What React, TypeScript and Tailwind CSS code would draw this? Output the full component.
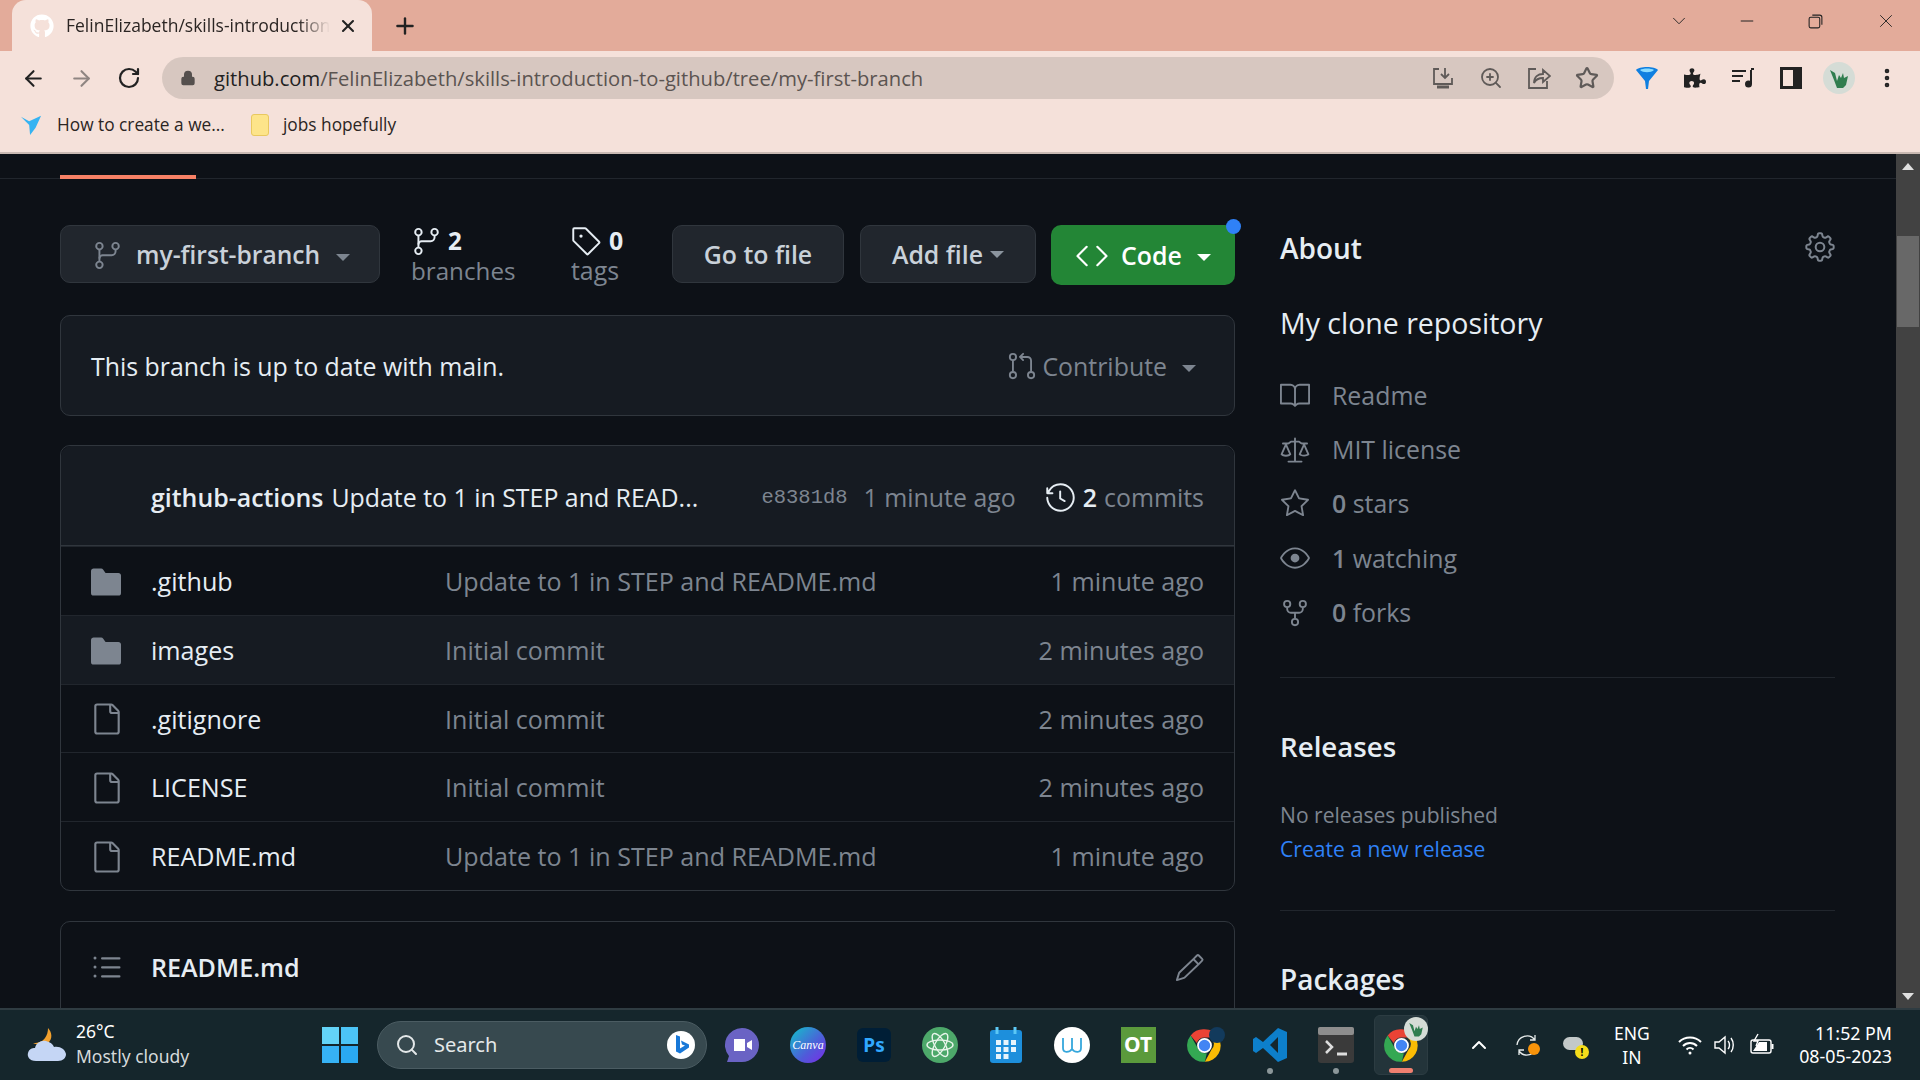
import type { ReactNode } from "react";
import { ArrowLeft, ArrowRight, ChevronDown, ChevronUp, Minus, MoreVertical, Plus, RotateCw, Search, Star, X, ZoomIn, Lock } from "lucide-react";
import { FaGithub, FaPuzzlePiece } from "react-icons/fa";
import {
  GoBook,
  GoCode,
  GoEye,
  GoFile,
  GoFileDirectoryFill,
  GoGear,
  GoGitBranch,
  GoGitPullRequest,
  GoHistory,
  GoLaw,
  GoListUnordered,
  GoPencil,
  GoRepoForked,
  GoStar,
  GoTag,
} from "react-icons/go";

const files = [
  { name: ".github", dir: true, message: "Update to 1 in STEP and README.md", age: "1 minute ago" },
  { name: "images", dir: true, message: "Initial commit", age: "2 minutes ago", hover: true },
  { name: ".gitignore", dir: false, message: "Initial commit", age: "2 minutes ago" },
  { name: "LICENSE", dir: false, message: "Initial commit", age: "2 minutes ago" },
  { name: "README.md", dir: false, message: "Update to 1 in STEP and README.md", age: "1 minute ago" },
];

function Caret({ className }: { className: string }) {
  return <span className={`inline-block h-0 w-0 border-x-[7px] border-t-[7px] border-x-transparent ${className}`} />;
}

function ChromeLogo() {
  return (
    <svg viewBox="0 0 48 48" className="size-[37px]">
      <path d="M24 3a21 21 0 0 1 18.200 10.500H24a10.500 10.500 0 0 0-10 7.300L6 11A21 21 0 0 1 24 3Z" fill="#ea4335" />
      <path d="M42.200 13.500A21 21 0 0 1 24.500 45L33 29.500a10.500 10.500 0 0 0-1-16Z" fill="#fbbc04" />
      <path d="M6 11l9 16a10.500 10.500 0 0 0 12 7l-2.500 11A21 21 0 0 1 6 11Z" fill="#34a853" />
      <circle cx="24" cy="24" r="8.500" fill="#4285f4" stroke="#fff" strokeWidth="2.200" />
    </svg>
  );
}

function Avatar({ className }: { className: string }) {
  return (
    <svg viewBox="0 0 32 32" className={className}>
      <circle cx="16" cy="16" r="16" fill="#d5dcd6" />
      <path d="M7 8l5 3 2 8 2-6 2 3 2-5 1 5 4-2-2 9-3 3h-6l-3-8Z" fill="#2f7d4f" />
    </svg>
  );
}

function ToolSlot({ children }: { children: ReactNode }) {
  return <div className="flex h-[42px] w-[48px] items-center justify-center">{children}</div>;
}

function TaskSlot({ children, dot }: { children: ReactNode; dot?: boolean }) {
  return (
    <div className="relative flex h-full w-[66px] items-center justify-center">
      {children}
      {dot && <span className="absolute bottom-[6px] size-[6px] rounded-full bg-[#8b9699]" />}
    </div>
  );
}

function AboutRow({ icon, children }: { icon: ReactNode; children: ReactNode }) {
  return (
    <div className="flex h-[54.4px] items-center text-[#7d8590]">
      <span className="flex w-[52px] text-[30px]">{icon}</span>
      {children}
    </div>
  );
}

function FileRow({ name, dir, message, age, hover }: { name: string; dir: boolean; message: string; age: string; hover?: boolean }) {
  return (
    <div className={`flex h-[68.8px] items-center border-t border-[#21262d] pl-[30px] pr-[30px] pt-[2px] text-[25.1px] first:border-t-0 ${hover ? "bg-[#161b22]" : ""}`}>
      <span className="flex w-[60px] text-[#7d8590]">
        {dir ? <GoFileDirectoryFill className="ml-[-3px] size-[36px]" /> : <GoFile className="ml-[-1px] size-[34px]" />}
      </span>
      <span className="w-[294px] text-[#e6edf3]">{name}</span>
      <span className="flex-1 text-[#7d8590]">{message}</span>
      <span className="text-[#7d8590]">{age}</span>
    </div>
  );
}

export default function App() {
  return (
    <div className="flex h-screen w-[1920px] flex-col overflow-hidden bg-[#0d1117] font-['Open_Sans','Noto_Sans',sans-serif] text-[24.9px]">
      {/* browser tab strip */}
      <div className="flex h-[51px] items-end bg-[#e3ab9a] pl-[12px]">
        <div className="flex h-[51px] w-[360px] items-center rounded-t-[14px] bg-[#f5e1da] pl-[18px] pr-[14px] text-[17.5px] text-[#2b2523]">
          <FaGithub className="size-[24px] shrink-0 text-white" />
          <span className="ml-[12px] w-[264px] shrink-0 whitespace-nowrap [mask-image:linear-gradient(to_right,black_88%,transparent)]">FelinElizabeth/skills-introduction-</span>
          <X className="ml-[8px] size-[20px] text-[#222]" strokeWidth={2.5} />
        </div>
        <div className="flex h-[51px] w-[66px] items-center justify-center">
          <Plus className="size-[26px] text-[#222]" strokeWidth={2.2} />
        </div>
        <div className="ml-auto flex h-[42px] self-start text-[#222]">
          <div className="flex w-[68px] items-center justify-center"><ChevronDown className="size-[22px]" strokeWidth={1} /></div>
          <div className="flex w-[68px] items-center justify-center"><Minus className="size-[20px]" strokeWidth={1.2} /></div>
          <div className="mr-[3px] flex w-[68px] items-center justify-center">
            <svg viewBox="0 0 16 16" className="size-[17px]" fill="none" stroke="currentColor"><rect x="2" y="4" width="10" height="10" rx="1.5" /><path d="M5 2h7a2 2 0 0 1 2 2v7" /></svg>
          </div>
          <div className="flex w-[68px] items-center justify-center"><X className="size-[22px]" strokeWidth={1} /></div>
        </div>
      </div>

      {/* toolbar */}
      <div className="flex h-[59px] items-center bg-[#f5e1da] pb-[5px] pl-[9px] pr-[9px]">
        <ToolSlot><ArrowLeft className="size-[25px] text-[#222]" strokeWidth={2} /></ToolSlot>
        <ToolSlot><ArrowRight className="size-[25px] text-[#8f8582]" strokeWidth={2} /></ToolSlot>
        <ToolSlot><RotateCw className="size-[24px] text-[#222]" strokeWidth={2.2} /></ToolSlot>
        <div className="ml-[9px] flex h-[42px] w-[1452px] shrink-0 items-center rounded-full bg-[#d7c7c0] pl-[18px] pr-[3px]">
          <Lock className="size-[16px] fill-[#55504e] text-[#55504e]" />
          <span className="ml-[18px] whitespace-nowrap text-[20.2px] text-[#5b5451]"><span className="text-[#222]">github.com</span>/FelinElizabeth/skills-introduction-to-github/tree/my-first-branch</span>
          <div className="ml-auto flex text-[#5f5a58]">
            <ToolSlot>
              <svg viewBox="0 0 24 24" className="size-[24px]" fill="none" stroke="currentColor" strokeWidth="1.800"><path d="M8 3H3v15h18v-6M14 2v10m-4-4 4 4 4-4" /><path d="M6 21h12" strokeWidth="3" /></svg>
            </ToolSlot>
            <ToolSlot><ZoomIn className="size-[24px]" strokeWidth={1.8} /></ToolSlot>
            <ToolSlot>
              <svg viewBox="0 0 24 24" className="size-[24px]" fill="none" stroke="currentColor" strokeWidth="1.800"><path d="M9 3H2v19h18v-7" /><path d="M7 17c0-6 4-9 9-9V4l7 6-7 6v-4c-4 0-7 1-9 5Z" /></svg>
            </ToolSlot>
            <ToolSlot><Star className="size-[24px]" strokeWidth={2.2} /></ToolSlot>
          </div>
        </div>
        <div className="ml-[9px] flex">
          <ToolSlot>
            <svg viewBox="0 0 24 24" className="size-[24px]"><path d="M1 4c3-4 19-4 22 0l-9 11-1 8h-2l-1-8Z" fill="#0f7fe0" /><path d="M5 4c3-2 11-2 14 0-3 3-11 3-14 0Z" fill="#8adcff" /></svg>
          </ToolSlot>
          <ToolSlot><FaPuzzlePiece className="size-[22px] text-[#222]" /></ToolSlot>
          <ToolSlot>
            <svg viewBox="0 0 24 24" className="size-[24px]" fill="none" stroke="#222" strokeWidth="2"><path d="M1 5h14M1 10h11M1 15h8M20 4v14" /><circle cx="17.500" cy="18" r="2.500" fill="#222" /><path d="M20 3h3" /></svg>
          </ToolSlot>
          <ToolSlot>
            <svg viewBox="0 0 22 22" className="size-[22px]"><path d="M0 0h22v22H0Zm3 3v16h10V3Z" fill="#222" fillRule="evenodd" /></svg>
          </ToolSlot>
          <ToolSlot><Avatar className="size-[32px]" /></ToolSlot>
          <ToolSlot><MoreVertical className="size-[24px] text-[#222]" strokeWidth={2.6} /></ToolSlot>
        </div>
      </div>

      {/* bookmarks */}
      <div className="flex h-[44px] items-center border-b-2 border-[#c9b9b2] bg-[#f5e1da] pb-[12px] pl-[20px] text-[17.3px] text-[#2b2523]">
        <svg viewBox="0 0 24 24" className="size-[22px]"><path d="M1 3l9 5 13-6-6 13-6 8-1-11Z" fill="#35b3f2" /></svg>
        <span className="ml-[15px] w-[194px] whitespace-nowrap">How to create a we...</span>
        <span className="h-[22px] w-[18px] rounded-[3px] border border-[#e9c85f] bg-[#fde48a]" />
        <span className="ml-[14px] whitespace-nowrap">jobs hopefully</span>
      </div>

      {/* page */}
      <main className="flex min-h-0 flex-1 overflow-hidden">
        <div className="min-w-0 flex-1">
          <div className="h-[25px] border-b border-[#21262d] pl-[60px]">
            <div className="h-[25px] w-[136px] border-b-[4px] border-[#f78166]" />
          </div>
          <div className="flex pl-[60px]">
            <section className="w-[1175px] shrink-0 pt-[46px]">
              <div className="flex h-[58px] items-start">
                <div className="flex h-[58px] w-[320px] items-center rounded-[10px] border border-[#30363d] bg-[#21262d] pl-[31px] pt-[2px] text-[24.6px] font-semibold text-[#c9d1d9]">
                  <GoGitBranch className="size-[31px] text-[#7d8590]" />
                  <span className="ml-[13px]">my-first-branch</span>
                  <Caret className="ml-[16px] mt-[4px] border-t-[#7d8590]" />
                </div>
                <div className="ml-[31px] w-[160px] text-[24.2px] text-[#7d8590]">
                  <div className="flex h-[30px] items-center pt-[2px]">
                    <GoGitBranch className="size-[31px] text-[#e6edf3]" />
                    <span className="ml-[6px] font-bold text-[#e6edf3]">2</span>
                  </div>
                  <div className="leading-[31px]">branches</div>
                </div>
                <div className="w-[101px] text-[#7d8590]">
                  <div className="flex h-[30px] items-center pt-[2px]">
                    <GoTag className="size-[31px] text-[#e6edf3]" />
                    <span className="ml-[7px] font-bold text-[#e6edf3]">0</span>
                  </div>
                  <div className="leading-[31px]">tags</div>
                </div>
                <div className="flex h-[58px] w-[172px] items-center justify-center rounded-[10px] border border-[#30363d] bg-[#21262d] pt-[2px] font-semibold text-[#c9d1d9]">Go to file</div>
                <div className="ml-[16px] flex h-[58px] w-[176px] items-center justify-center rounded-[10px] border border-[#30363d] bg-[#21262d] pt-[2px] font-semibold text-[#c9d1d9]">
                  Add file
                  <Caret className="ml-[7px] mt-[-2px] border-t-[#8b949e]" />
                </div>
                <div className="relative ml-[15px] flex h-[60px] w-[184px] items-center justify-center rounded-[10px] bg-[#238636] pt-[2px] font-semibold text-white">
                  <GoCode className="size-[34px]" />
                  <span className="ml-[12px]">Code</span>
                  <Caret className="ml-[15px] mt-[2px] border-t-white" />
                  <span className="absolute right-[-6px] top-[-6px] size-[15px] rounded-full bg-[#2f81f7]" />
                </div>
              </div>

              <div className="mt-[32px] flex h-[101px] items-center justify-between rounded-[10px] border border-[#30363d] bg-[#161b22] pl-[30px] pr-[38px] pt-[2px] text-[#e6edf3]">
                <span>This branch is up to date with main.</span>
                <span className="flex items-center text-[#7d8590]">
                  <GoGitPullRequest className="size-[30px]" />
                  <span className="ml-[5px]">Contribute</span>
                  <Caret className="ml-[15px] mt-[4px] border-t-[#7d8590]" />
                </span>
              </div>

              <div className="mt-[29px] rounded-[10px] border border-[#30363d]">
                <div className="flex h-[100px] items-center rounded-t-[10px] border-b border-[#30363d] bg-[#161b22] pl-[90px] pr-[30px] pt-[4px] text-[#e6edf3]">
                  <span className="font-semibold">github-actions</span>
                  <span className="ml-[8px] w-[372px] whitespace-nowrap">Update to 1 in STEP and READ...</span>
                  <span className="ml-[58px] pt-[2px] font-['Liberation_Mono',monospace] text-[20.5px] text-[#7d8590]">e8381d8</span>
                  <span className="ml-[16px] text-[#7d8590]">1 minute ago</span>
                  <span className="ml-auto flex items-center text-[#7d8590]">
                    <GoHistory className="size-[31px] text-[#e6edf3]" />
                    <span className="ml-[7px] font-semibold text-[#e6edf3]">2</span>
                    <span className="ml-[7px]">commits</span>
                  </span>
                </div>
                {files.map((file) => (
                  <FileRow key={file.name} {...file} />
                ))}
              </div>

              <div className="mt-[30px] h-[200px] rounded-t-[10px] border border-[#30363d]">
                <div className="flex h-[91px] items-center pl-[28px] pr-[29px] text-[25.1px]">
                  <GoListUnordered className="size-[36px] text-[#7d8590]" />
                  <span className="ml-[26px] font-semibold text-[#e6edf3]">README.md</span>
                  <GoPencil className="ml-auto size-[31px] text-[#7d8590]" />
                </div>
              </div>
            </section>

            <aside className="ml-[45px] w-[555px] shrink-0 text-[#e6edf3]">
              <div className="mt-[49px] flex h-[40px] items-center justify-between">
                <h2 className="text-[28px] font-semibold">About</h2>
                <GoGear className="mr-[-1px] mt-[-3px] size-[32px] text-[#7d8590]" />
              </div>
              <p className="mt-[35px] text-[28.5px] leading-[40px]">My clone repository</p>
              <div className="mt-[25px]">
                <AboutRow icon={<GoBook />}>Readme</AboutRow>
                <AboutRow icon={<GoLaw />}>MIT license</AboutRow>
                <AboutRow icon={<GoStar />}><b className="font-semibold">0</b>&nbsp;stars</AboutRow>
                <AboutRow icon={<GoEye />}><b className="font-semibold">1</b>&nbsp;watching</AboutRow>
                <AboutRow icon={<GoRepoForked />}><b className="font-semibold">0</b>&nbsp;forks</AboutRow>
              </div>
              <div className="mt-[37px] border-t border-[#21262d]" />
              <h2 className="mt-[48px] text-[27.7px] font-semibold leading-[40px]">Releases</h2>
              <p className="mt-[35px] text-[21.100px] leading-[28px] text-[#7d8590]">No releases published</p>
              <p className="mt-[6px] text-[21.100px] leading-[28px] text-[#2f81f7]">Create a new release</p>
              <div className="mt-[47px] border-t border-[#21262d]" />
              <h2 className="mt-[48px] text-[28px] font-semibold leading-[40px]">Packages</h2>
            </aside>
          </div>
        </div>

        {/* scrollbar */}
        <div className="flex w-[24px] shrink-0 flex-col bg-[#424242]">
          <div className="flex h-[24px] items-center justify-center"><span className="h-0 w-0 border-x-[6px] border-b-[7px] border-x-transparent border-b-[#e0e0e0]" /></div>
          <div className="mx-[1px] mt-[58px] h-[91px] bg-[#686868]" />
          <div className="mt-auto flex h-[24px] items-center justify-center"><span className="h-0 w-0 border-x-[6px] border-t-[7px] border-x-transparent border-t-[#e0e0e0]" /></div>
        </div>
      </main>

      {/* taskbar */}
      <footer className="flex h-[72px] items-center border-t-2 border-[#2f3c42] bg-[#15262c] font-['Noto_Sans',sans-serif] text-white">
        <svg viewBox="0 0 40 36" className="ml-[27px] h-[36px] w-[40px]">
          <path d="M21 1c4 4 5 11 0 15-4 3-11 2-15 0 6 0 10-2 12-5 2-3 3-6 3-10Z" fill="#f2a12e" />
          <path d="M9 34C2 34 0 29 1 26c1-4 4-5 7-5 1-5 6-8 11-7 4 1 7 3 8 6 6-1 11 2 12 7 0 4-3 7-8 7Z" fill="#c5d6f5" />
        </svg>
        <div className="ml-[9px] mt-[-2px] w-[246px] text-[17.5px] leading-[25px]">
          <div>26°C</div>
          <div className="text-[#d6dadb]">Mostly cloudy</div>
        </div>
        <svg viewBox="0 0 36 36" className="size-[36px]">
          <rect x="0" y="0" width="17" height="17" fill="#63d3f7" />
          <rect x="19" y="0" width="17" height="17" fill="#4cc4f6" />
          <rect x="0" y="19" width="17" height="17" fill="#36b2f5" />
          <rect x="19" y="19" width="17" height="17" fill="#2aa9f2" />
        </svg>
        <div className="ml-[19px] flex h-[48px] w-[330px] items-center rounded-full border border-[#4b5c62] bg-[#37494f] pl-[17px] pr-[10px] text-[20px] text-[#e4e8e9]">
          <Search className="size-[24px]" strokeWidth={2} />
          <span className="ml-[15px]">Search</span>
          <svg viewBox="0 0 30 30" className="ml-auto size-[30px]"><circle cx="15" cy="15" r="14" fill="#fff" /><path d="M10 5l4 1.500v12l5-3-3-1-1-4 8 4v3l-9 6-4-2Z" fill="#1878d8" /></svg>
        </div>
        <div className="ml-[2px] flex h-full items-center">
          <TaskSlot>
            <svg viewBox="0 0 36 36" className="size-[36px]"><path d="M18 1a17 17 0 0 1 0 34H3l2-6A17 17 0 0 1 18 1Z" fill="#6a63c4" /><path d="M10 12h11v12H10Zm13 4 5-3v10l-5-3Z" fill="#fff" /></svg>
          </TaskSlot>
          <TaskSlot>
            <div className="flex size-[36px] items-center justify-center rounded-full bg-[linear-gradient(135deg,#10c4c9,#4f5bd9_60%,#7d2ae8)] font-['Liberation_Serif',serif] text-[12px] italic">Canva</div>
          </TaskSlot>
          <TaskSlot>
            <div className="flex size-[34px] items-center justify-center rounded-[6px] bg-[#001e36] text-[19px] font-bold text-[#31a8ff]">Ps</div>
          </TaskSlot>
          <TaskSlot>
            <svg viewBox="0 0 36 36" className="size-[36px]" fill="none" stroke="#e8f5ea" strokeWidth="1.400"><circle cx="18" cy="18" r="18" fill="#4da86a" stroke="none" /><ellipse cx="18" cy="18" rx="13" ry="5" /><ellipse cx="18" cy="18" rx="13" ry="5" transform="rotate(60 18 18)" /><ellipse cx="18" cy="18" rx="13" ry="5" transform="rotate(120 18 18)" /></svg>
          </TaskSlot>
          <TaskSlot>
            <svg viewBox="0 0 32 36" className="h-[36px] w-[32px]"><rect y="3" width="32" height="33" rx="3" fill="#1d8fdc" /><path d="M7 0v7M25 0v7" stroke="#5cc8f5" strokeWidth="3" /><g fill="#e6f4fc"><rect x="6" y="13" width="5" height="5" /><rect x="13.500" y="13" width="5" height="5" /><rect x="21" y="13" width="5" height="5" /><rect x="6" y="20" width="5" height="5" /><rect x="13.500" y="20" width="5" height="5" /><rect x="21" y="20" width="5" height="5" /><rect x="6" y="27" width="5" height="5" /><rect x="13.500" y="27" width="5" height="5" /></g></svg>
          </TaskSlot>
          <TaskSlot>
            <svg viewBox="0 0 36 36" className="size-[36px]"><circle cx="18" cy="18" r="18" fill="#fff" /><path d="M9 11v10c0 5 6 5 9 1 3 4 9 4 9-1V11M18 11v11" fill="none" stroke="#35a7dc" strokeWidth="1.800" /></svg>
          </TaskSlot>
          <TaskSlot>
            <div className="flex h-[36px] w-[35px] items-center justify-center bg-[#5b9a3c] text-[21px] font-bold text-white">OT</div>
          </TaskSlot>
          <TaskSlot>
            <div className="relative"><ChromeLogo /><span className="absolute right-[-2px] top-0 size-[16px] rounded-full bg-[#123a5c]" /></div>
          </TaskSlot>
          <TaskSlot dot>
            <svg viewBox="0 0 36 36" className="size-[36px]"><path d="M26 1l9 4v26l-9 4-15-14-7 5-3-2v-12l3-2 7 5Zm0 9-8 8 8 8Z" fill="#0d7fcb" fillRule="evenodd" /></svg>
          </TaskSlot>
          <TaskSlot dot>
            <svg viewBox="0 0 36 36" className="size-[36px]"><rect width="36" height="36" rx="3" fill="#3a3a3a" /><rect width="36" height="8" rx="2" fill="#8d8d8d" /><path d="M8 14l6 6-6 6" fill="none" stroke="#ddd" strokeWidth="2.500" /><path d="M19 27h10" stroke="#ddd" strokeWidth="3" /></svg>
          </TaskSlot>
          <div className="relative ml-[5px] flex h-[60px] w-[54px] items-center justify-center rounded-[6px] border border-[#2c3c42] bg-[#23343a]">
            <div className="relative"><ChromeLogo /><Avatar className="absolute right-[-8px] top-[-10px] size-[24px]" /></div>
            <span className="absolute bottom-[1px] h-[5px] w-[24px] rounded-full bg-[#f08070]" />
          </div>
        </div>
        <ChevronUp className="ml-[39px] size-[24px]" strokeWidth={2} />
        <div className="relative ml-[24px] size-[24px]">
          <svg viewBox="0 0 24 24" className="size-[24px]" fill="none" stroke="#e8ecec" strokeWidth="1.300"><path d="M2 12a10 10 0 0 1 18-5M20 2v5h-5M22 13a10 10 0 0 1-18 5M4 22v-5h5" /></svg>
          <span className="absolute bottom-[2px] right-[-1px] size-[12px] rounded-full bg-[#f7930a]" />
        </div>
        <div className="relative ml-[24px] h-[20px] w-[24px]">
          <span className="absolute left-0 top-[2px] h-[13px] w-[20px] rounded-full bg-[#c3c9c9]" />
          <span className="absolute bottom-[-4px] right-[-2px] flex size-[14px] items-center justify-center rounded-full bg-[#f5dd1a] text-[10px] font-bold leading-none text-black">!</span>
        </div>
        <div className="ml-[27px] text-center text-[17.5px] leading-[24px]">
          <div>ENG</div>
          <div>IN</div>
        </div>
        <svg viewBox="0 0 24 24" className="ml-[28px] size-[24px]" fill="none" stroke="#fff" strokeWidth="2"><path d="M1 9c6-6 16-6 22 0M5 13c4-4 10-4 14 0M8.500 16.500c2-2 5-2 7 0" /><circle cx="12" cy="20" r="1.500" fill="#fff" stroke="none" /></svg>
        <svg viewBox="0 0 24 24" className="ml-[11px] size-[24px]" fill="none" stroke="#fff" strokeWidth="1.400"><path d="M2 9h4l6-5v16l-6-5H2Z" /><path d="M15 8c2 2 2 6 0 8M18 5c3 4 3 10 0 14" /></svg>
        <svg viewBox="0 0 26 24" className="ml-[12px] h-[24px] w-[26px]" fill="none" stroke="#fff" strokeWidth="1.400"><rect x="2" y="7" width="20" height="13" rx="2" /><path d="M4 18l6-9h8v9Z" fill="#fff" stroke="none" /><path d="M23.500 11v5" strokeWidth="2" /><path d="M9 1 5 8h4l-2 5" /></svg>
        <div className="ml-auto pr-[28px] text-right text-[17.8px] leading-[23px]">
          <div>11:52 PM</div>
          <div>08-05-2023</div>
        </div>
      </footer>
    </div>
  );
}
